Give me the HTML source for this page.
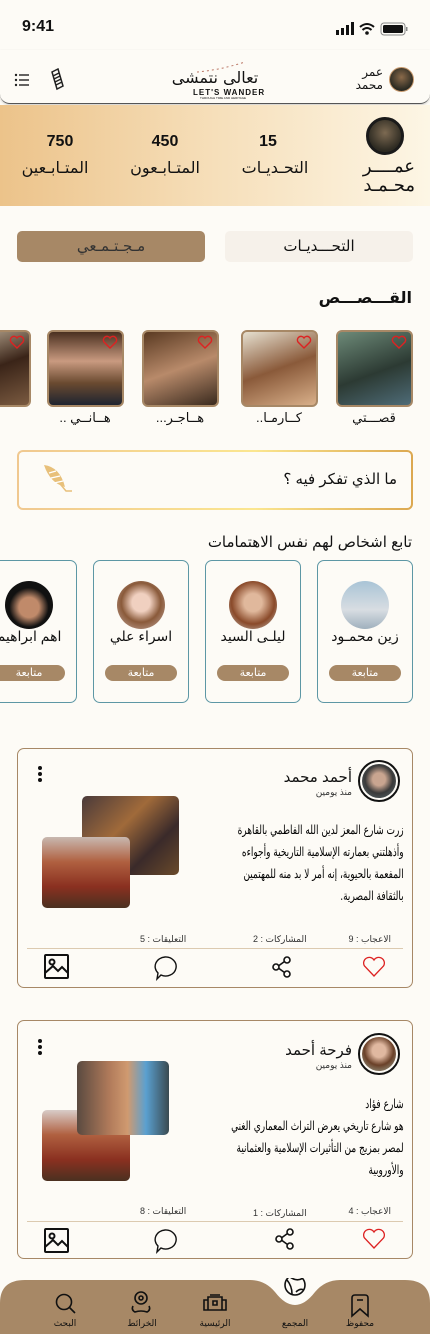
<!DOCTYPE html>
<html><head><meta charset="utf-8"><style>
*{margin:0;padding:0;box-sizing:border-box}
body{width:430px;height:1334px;overflow:hidden;background:#fdfbf6;font-family:"Liberation Sans","DejaVu Sans",sans-serif;color:#111;position:relative}
.a{position:absolute}
.r{direction:rtl}
.story{position:absolute;top:330px;width:77px;height:77px;border:2px solid #a78866;border-radius:6px;overflow:hidden}
.story .h{position:absolute;right:4px;top:3px}
.slab{position:absolute;top:410px;font-size:13px;width:90px;text-align:center;letter-spacing:1px}
.card{position:absolute;top:560px;width:96px;height:143px;border:1px solid #5d97a5;border-radius:7px}
.card .av{position:absolute;left:23px;top:20px;width:48px;height:48px;border-radius:50%}
.card .nm{position:absolute;top:67px;width:100%;text-align:center;font-size:14px;direction:rtl}
.card .bt{position:absolute;left:11px;top:104px;width:72px;height:16px;border-radius:8px;background:#a78866;color:#fff;font-size:11px;text-align:center;line-height:16px}
.post{position:absolute;left:17px;width:396px;border:1px solid #a78866;border-radius:7px}
.ptxt{position:absolute;direction:rtl;font-family:"DejaVu Serif",serif;font-size:12.5px;line-height:22px;text-align:right;color:#000;white-space:nowrap;transform:scaleX(0.72);transform-origin:right top}
.st{position:absolute;font-size:9px;color:#333;direction:rtl}
</style></head><body>

<div class="a" style="left:22px;top:18px;font-size:16px;font-weight:bold">9:41</div>
<svg class="a" style="left:336px;top:22px" width="72" height="14">
<rect x="0" y="8" width="3" height="5" fill="#111"/><rect x="5" y="6" width="3" height="7" fill="#111"/><rect x="10" y="3" width="3" height="10" fill="#111"/><rect x="15" y="0" width="3" height="13" fill="#111"/>
<path d="M24 5 Q31 -1 38 5 M26.5 8 Q31 4 35.5 8" stroke="#111" stroke-width="2" fill="none"/><circle cx="31" cy="11" r="1.8" fill="#111"/>
<rect x="45" y="1" width="24" height="12" rx="3" stroke="#888" fill="none"/><rect x="47" y="3" width="20" height="8" rx="1.5" fill="#111"/><rect x="70" y="5" width="1.5" height="4" fill="#888"/>
</svg>

<div class="a" style="left:0;top:50px;width:430px;height:54px;border-bottom:1.5px solid #555;border-radius:0 0 10px 10px;box-shadow:0 1px 2px rgba(0,0,0,.2)"></div>
<svg class="a" style="left:14px;top:73px" width="16" height="14"><g fill="#222"><circle cx="2" cy="2" r="1.2"/><circle cx="2" cy="7" r="1.2"/><circle cx="2" cy="12" r="1.2"/><rect x="5" y="1.3" width="10" height="1.4"/><rect x="5" y="6.3" width="10" height="1.4"/><rect x="5" y="11.3" width="10" height="1.4"/></g></svg>
<svg class="a" style="left:49px;top:68px" width="16" height="24"><g stroke="#222" stroke-width="1.5" fill="none"><path d="M3 4 L9 1 L14 18 L8 21 Z"/><path d="M4 8 L10 5 M5 11 L11 8 M6 14 L12 11 M7 17 L13 14"/></g></svg>
<div class="a" style="left:170px;top:70px;width:90px;text-align:center;font-family:'DejaVu Sans',sans-serif;font-size:16px;direction:rtl;line-height:16px">تعالى نتمشى</div>
<div class="a" style="left:193px;top:88px;font-size:8px;font-weight:bold;letter-spacing:1px">LET'S WANDER</div>
<div class="a" style="left:200px;top:96px;font-size:3px">THROUGH TIME AND HERITAGE</div>
<svg class="a" style="left:195px;top:60px" width="55" height="14"><path d="M2 12 Q25 10 50 2" stroke="#b76" stroke-dasharray="2 3" fill="none"/></svg>
<div class="a r" style="left:350px;top:66px;width:33px;font-size:12px;line-height:13px;text-align:right">عمر<br>محمد</div>
<div class="a" style="left:389px;top:67px;width:25px;height:25px;border-radius:50%;border:1.5px solid #c89a6e;background:radial-gradient(circle at 50% 40%,#8a6a4a,#2a2a22 70%)"></div>

<div class="a" style="left:0;top:105px;width:430px;height:101px;background:linear-gradient(90deg,#ecc38a,#f6dfba 50%,#fdf6e5)"></div>
<div class="a" style="left:366px;top:117px;width:38px;height:38px;border-radius:50%;border:3px solid #1a1a1a;background:radial-gradient(circle at 50% 40%,#7d6a52,#2e2b22 70%)"></div>
<div class="a r" style="left:345px;top:157px;width:70px;font-size:18px;line-height:19px;text-align:right;letter-spacing:2px">عمــــر<br>محـمـد</div>
<div class="a" style="left:238px;top:133px;width:60px;text-align:center;font-size:16px;font-weight:bold">15</div>
<div class="a r" style="left:232px;top:158px;width:86px;text-align:center;font-size:16px;letter-spacing:1px">التحـديـات</div>
<div class="a" style="left:140px;top:133px;width:50px;text-align:center;font-size:16px;font-weight:bold">450</div>
<div class="a r" style="left:118px;top:158px;width:94px;text-align:center;font-size:16px;letter-spacing:1px">المتـابـعون</div>
<div class="a" style="left:35px;top:133px;width:50px;text-align:center;font-size:16px;font-weight:bold">750</div>
<div class="a r" style="left:15px;top:158px;width:80px;text-align:center;font-size:16px;letter-spacing:1px">المتـابـعين</div>

<div class="a r" style="left:17px;top:231px;width:188px;height:31px;border-radius:5px;background:#a78866;text-align:center;line-height:31px;font-size:15px;letter-spacing:3px;color:#333">مـجـتـمـعي</div>
<div class="a r" style="left:225px;top:231px;width:188px;height:31px;border-radius:5px;background:#f6f1ea;text-align:center;line-height:31px;font-size:15px;letter-spacing:2px">التحـــديـات</div>

<div class="a r" style="right:18px;top:288px;font-size:16px;font-weight:bold;letter-spacing:2px">القـــصـــص</div>

<div class="story" style="left:336px;background:linear-gradient(160deg,#6d8a78,#2c3a33 55%,#4e6b77)"><svg class="h" width="16" height="14"><path d="M8 13 L2 7 A3.5 3.5 0 0 1 8 3 A3.5 3.5 0 0 1 14 7 Z" stroke="#d22" stroke-width="1.4" fill="none"/></svg></div>
<div class="story" style="left:241px;background:linear-gradient(160deg,#e6e0d0,#8a5a3a 50%,#d9b08a)"><svg class="h" width="16" height="14"><path d="M8 13 L2 7 A3.5 3.5 0 0 1 8 3 A3.5 3.5 0 0 1 14 7 Z" stroke="#d22" stroke-width="1.4" fill="none"/></svg></div>
<div class="story" style="left:142px;background:linear-gradient(160deg,#5a3a22,#b88a6a 50%,#3a2a1e)"><svg class="h" width="16" height="14"><path d="M8 13 L2 7 A3.5 3.5 0 0 1 8 3 A3.5 3.5 0 0 1 14 7 Z" stroke="#d22" stroke-width="1.4" fill="none"/></svg></div>
<div class="story" style="left:47px;background:linear-gradient(180deg,#4a3020,#c99a80 40%,#6a4a30 70%,#1e2430)"><svg class="h" width="16" height="14"><path d="M8 13 L2 7 A3.5 3.5 0 0 1 8 3 A3.5 3.5 0 0 1 14 7 Z" stroke="#d22" stroke-width="1.4" fill="none"/></svg></div>
<div class="story" style="left:-46px;background:linear-gradient(160deg,#c8b8a0,#3a2418 50%,#7a5a40)"><svg class="h" width="16" height="14"><path d="M8 13 L2 7 A3.5 3.5 0 0 1 8 3 A3.5 3.5 0 0 1 14 7 Z" stroke="#d22" stroke-width="1.4" fill="none"/></svg></div>
<div class="slab r" style="left:329px">قصـــتي</div>
<div class="slab r" style="left:234px">كــارمـا..</div>
<div class="slab r" style="left:135px">هــاجـر...</div>
<div class="slab r" style="left:40px">هــانــي ..</div>
<div class="slab r" style="left:-55px">هـــ</div>

<div class="a" style="left:17px;top:450px;width:396px;height:60px;border-radius:6px;padding:2px;background:linear-gradient(90deg,#f0c890,#fbe690 60%,#dca850)"><div style="width:100%;height:100%;background:#fdfbf6;border-radius:4px"></div></div>
<div class="a r" style="right:33px;top:470px;font-size:15px">ما الذي تفكر فيه ؟</div>
<svg class="a" style="left:40px;top:461px" width="32" height="36"><path d="M4 4 Q20 6 25 26 Q10 22 4 4 Z" fill="#e8c07a"/><path d="M6 6 L26 30 L32 30" stroke="#e8c07a" stroke-width="1.5" fill="none"/><path d="M9 12 L16 10 M11 17 L20 15 M14 22 L23 20" stroke="#fff" stroke-width="1.2"/></svg>

<div class="a r" style="right:18px;top:533px;font-size:15px">تابع اشخاص لهم نفس الاهتمامات</div>

<div class="card" style="left:317px"><div class="av" style="background:linear-gradient(180deg,#a9c4d6,#d8dde2 60%,#9fb0bd)"></div><div class="nm">زين محمـود</div><div class="bt">متابعة</div></div>
<div class="card" style="left:205px"><div class="av" style="background:radial-gradient(circle at 50% 45%,#e0b89c 25%,#8a4a2a 60%,#c9ccc8)"></div><div class="nm">ليلـى السيد</div><div class="bt">متابعة</div></div>
<div class="card" style="left:93px"><div class="av" style="background:radial-gradient(circle at 50% 45%,#f0d0c0 25%,#8a5a3a 55%,#c9b0a8)"></div><div class="nm">اسراء علي</div><div class="bt">متابعة</div></div>
<div class="card" style="left:-19px"><div class="av" style="background:radial-gradient(circle at 50% 55%,#c08a6a 28%,#111 55%)"></div><div class="nm">اهم ابراهيم</div><div class="bt">متابعة</div></div>

<div class="post" style="top:748px;height:240px"></div>
<div class="a" style="left:358px;top:760px;width:42px;height:42px;border-radius:50%;border:2px solid #111;padding:2px"><div style="width:100%;height:100%;border-radius:50%;background:radial-gradient(circle at 50% 45%,#c9a590 25%,#3a3a3a 55%,#5a6a70)"></div></div>
<div class="a r" style="right:78px;top:768px;font-size:15px">أحمد محمد</div>
<div class="a r" style="right:78px;top:787px;font-size:9px;color:#333">منذ يومين</div>
<svg class="a" style="left:37px;top:765px" width="6" height="18"><circle cx="3" cy="3" r="2" fill="#111"/><circle cx="3" cy="9" r="2" fill="#111"/><circle cx="3" cy="15" r="2" fill="#111"/></svg>
<div class="a" style="left:82px;top:796px;width:97px;height:79px;border-radius:5px;background:linear-gradient(135deg,#4a3a3a,#a06a3a 40%,#3a2a2a 70%,#6a4a2a)"></div>
<div class="a" style="left:42px;top:837px;width:88px;height:71px;border-radius:5px;background:linear-gradient(180deg,#c8b8b0 0%,#b06040 35%,#8a3020 70%,#4a3020)"></div>
<div class="ptxt" style="top:819px;right:26px">زرت شارع المعز لدين الله الفاطمي بالقاهرة<br>وأذهلتني بعمارته الإسلامية التاريخية وأجواءه<br>المفعمة بالحيوية، إنه أمر لا بد منه للمهتمين<br>بالثقافة المصرية.</div>
<div class="st" style="right:39px;top:934px">الاعجاب : 9</div>
<div class="st" style="left:253px;top:934px">المشاركات : 2</div>
<div class="st" style="left:140px;top:934px">التعليقات : 5</div>
<div class="a" style="left:27px;top:948px;width:376px;height:1px;background:#dccab0"></div>
<svg class="a" style="left:362px;top:956px" width="24" height="22"><path d="M12 20 L2.5 10 A5 5 0 0 1 12 4 A5 5 0 0 1 21.5 10 Z" stroke="#d22" stroke-width="1.3" fill="none"/></svg>
<svg class="a" style="left:271px;top:955px" width="22" height="24"><g stroke="#111" stroke-width="1.6" fill="none"><circle cx="16" cy="5" r="3"/><circle cx="5" cy="12" r="3"/><circle cx="16" cy="19" r="3"/><path d="M8 10.5 L13.5 6.5 M8 13.5 L13.5 17.5"/></g></svg>
<svg class="a" style="left:153px;top:955px" width="26" height="26"><path d="M12 2 A10.5 9.5 0 1 1 8 20 L4 24 L5 18 A10.5 9.5 0 0 1 12 2 Z" stroke="#111" stroke-width="1.4" fill="none"/></svg>
<svg class="a" style="left:44px;top:954px" width="25" height="25"><g stroke="#111" stroke-width="2" fill="none"><rect x="1" y="1" width="23" height="23" rx="1"/><circle cx="8" cy="8" r="2.5"/><path d="M1 19 L9 12 L14 17 L18 13 L24 19"/></g></svg>

<div class="post" style="top:1020px;height:239px"></div>
<div class="a" style="left:358px;top:1033px;width:42px;height:42px;border-radius:50%;border:2px solid #111;padding:2px"><div style="width:100%;height:100%;border-radius:50%;background:radial-gradient(circle at 50% 40%,#e0b8a0 25%,#6a4028 55%,#a0b0a0)"></div></div>
<div class="a r" style="right:78px;top:1041px;font-size:15px">فرحة أحمد</div>
<div class="a r" style="right:78px;top:1060px;font-size:9px;color:#333">منذ يومين</div>
<svg class="a" style="left:37px;top:1038px" width="6" height="18"><circle cx="3" cy="3" r="2" fill="#111"/><circle cx="3" cy="9" r="2" fill="#111"/><circle cx="3" cy="15" r="2" fill="#111"/></svg>
<div class="a" style="left:42px;top:1110px;width:88px;height:71px;border-radius:5px;background:linear-gradient(180deg,#d8ccc8 0%,#b06040 35%,#8a3020 70%,#4a3020)"></div>
<div class="a" style="left:77px;top:1061px;width:92px;height:74px;border-radius:5px;background:linear-gradient(90deg,#5a4a40,#b07a5a 35%,#d09a70 55%,#5aa0d0 75%,#3a4a50)"></div>
<div class="ptxt" style="top:1093px;right:26px">شارع فؤاد<br>هو شارع تاريخي يعرض التراث المعماري الغني<br>لمصر بمزيج من التأثيرات الإسلامية والعثمانية<br>والأوروبية</div>
<div class="st" style="right:39px;top:1206px">الاعجاب : 4</div>
<div class="st" style="left:253px;top:1208px">المشاركات : 1</div>
<div class="st" style="left:140px;top:1206px">التعليقات : 8</div>
<div class="a" style="left:27px;top:1221px;width:376px;height:1px;background:#dccab0"></div>
<svg class="a" style="left:362px;top:1228px" width="24" height="22"><path d="M12 20 L2.5 10 A5 5 0 0 1 12 4 A5 5 0 0 1 21.5 10 Z" stroke="#d22" stroke-width="1.3" fill="none"/></svg>
<svg class="a" style="left:274px;top:1227px" width="22" height="24"><g stroke="#111" stroke-width="1.6" fill="none"><circle cx="16" cy="5" r="3"/><circle cx="5" cy="12" r="3"/><circle cx="16" cy="19" r="3"/><path d="M8 10.5 L13.5 6.5 M8 13.5 L13.5 17.5"/></g></svg>
<svg class="a" style="left:153px;top:1228px" width="26" height="26"><path d="M12 2 A10.5 9.5 0 1 1 8 20 L4 24 L5 18 A10.5 9.5 0 0 1 12 2 Z" stroke="#111" stroke-width="1.4" fill="none"/></svg>
<svg class="a" style="left:44px;top:1228px" width="25" height="25"><g stroke="#111" stroke-width="2" fill="none"><rect x="1" y="1" width="23" height="23" rx="1"/><circle cx="8" cy="8" r="2.5"/><path d="M1 19 L9 12 L14 17 L18 13 L24 19"/></g></svg>

<svg class="a" style="left:0;top:1278px" width="430" height="56"><path d="M0 56 L0 25 Q0 2 25 2 L250 2 Q265 2 275 14 Q295 40 315 14 Q325 2 340 2 L405 2 Q430 2 430 25 L430 56 Z" fill="#a78866"/>
<g stroke="#111" stroke-width="1.6" fill="none">
<circle cx="295" cy="7" r="10"/><path d="M287 2 Q292 8 292 16 M290 -1 Q297 4 303 0 M296 14 Q300 10 304 12"/>
<path d="M352 20 L352 38 L360 31 L368 38 L368 20 Q368 17 365 17 L355 17 Q352 17 352 20 Z"/><path d="M357 22 L363 22"/>
<path d="M204 32 L204 22 L208 22 L208 19 L222 19 L222 22 L226 22 L226 32 Z M208 22 L208 32 M222 22 L222 32 M213 23 L217 23 L217 27 L213 27 Z M210 17 L220 17"/>
<circle cx="141" cy="20" r="6"/><circle cx="141" cy="20" r="2"/><path d="M133 28 Q131 32 135 34 Q141 32 147 34 Q151 32 149 28"/>
<circle cx="64" cy="24" r="7.5"/><path d="M69.5 29.5 L75 35"/>
</g></svg>
<div class="a r" style="left:342px;top:1318px;width:36px;text-align:center;font-size:9px">محفوظ</div>
<div class="a r" style="left:277px;top:1318px;width:36px;text-align:center;font-size:9px">المجمع</div>
<div class="a r" style="left:197px;top:1318px;width:36px;text-align:center;font-size:9px">الرئيسية</div>
<div class="a r" style="left:124px;top:1318px;width:36px;text-align:center;font-size:9px">الخرائط</div>
<div class="a r" style="left:47px;top:1318px;width:36px;text-align:center;font-size:9px">البحث</div>
</body></html>
